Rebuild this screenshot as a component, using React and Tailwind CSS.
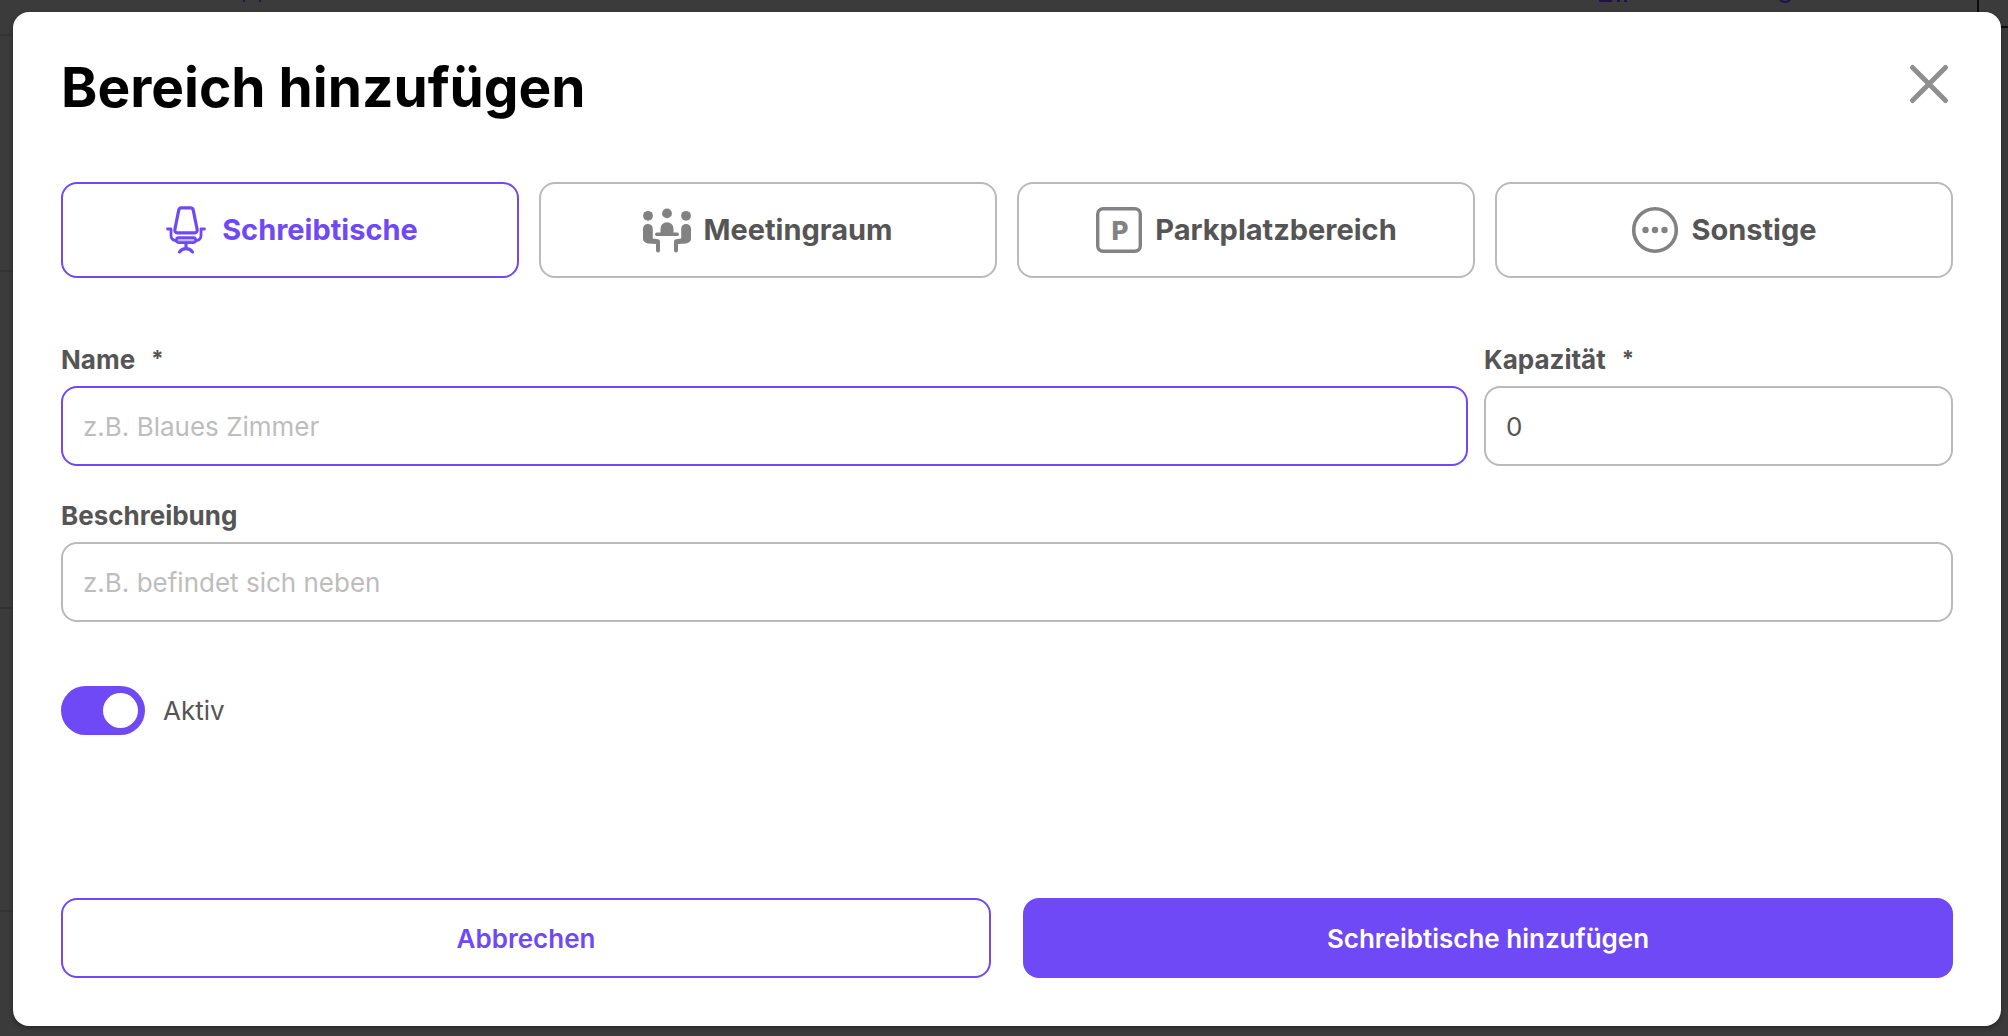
import { useState } from 'react';
import clsx from 'clsx';

const ChairIcon = () => (
  <svg viewBox="0 0 48 48" className="size-12 shrink-0" fill="none" stroke="currentColor" strokeLinecap="round" strokeLinejoin="round" aria-hidden="true">
    <path strokeWidth="3.2" d="M19.4 1.9h9.2c1.5 0 2.4 1 2.7 2.4l3.8 18.9c.4 2.2-.6 3.7-2.7 3.7H15.6c-2.1 0-3.1-1.5-2.7-3.7l3.8-18.9c.3-1.4 1.2-2.4 2.7-2.4z" />
    <path strokeWidth="2.8" d="M5.5 23H9v6.500c0 3 1.5 4.5 4.6 5.2M42.5 23H39v6.500c0 3-1.5 4.5-4.6 5.2" />
    <rect x="14.5" y="31.6" width="19" height="5" rx="2" fill="#c3b4fb" strokeWidth="2.6" />
    <path strokeWidth="3.2" d="M24 37v5.500M17.500 46c1.5-2.300 3.700-3.400 6.500-3.400s5 1.100 6.500 3.400" />
  </svg>
);

const MeetingIcon = () => (
  <svg viewBox="0 0 48 48" className="size-12 shrink-0" fill="currentColor" aria-hidden="true">
    <circle cx="5" cy="9.800" r="4.900" />
    <circle cx="24" cy="7.400" r="4.900" />
    <circle cx="43" cy="9.800" r="4.900" />
    <path d="M13.800 26.500h3.700v-3.800a6.500 6.500 0 0 1 13 0v3.800h3.700a1.800 1.800 0 0 1 0 3.600H13.800a1.800 1.800 0 0 1 0-3.600z" />
    <path d="M0 22.800a4.900 4.900 0 0 1 9.800 0v9.800l5 .6c1.400.2 2.200 1 2.200 2.300v8.900a2 2 0 0 1-4 0v-6.300l-8.200-.7C1.800 37.100 0 35.400 0 32.600z" />
    <path d="M48 22.800a4.900 4.900 0 0 0-9.800 0v9.800l-5 .6c-1.400.2-2.200 1-2.200 2.300v8.900a2 2 0 0 0 4 0v-6.300l8.200-.7c3-.3 4.800-2 4.800-4.800z" />
  </svg>
);

const ParkingIcon = () => (
  <svg viewBox="0 0 48 48" className="size-12 shrink-0" aria-hidden="true">
    <rect x="2.700" y="2.700" width="42.600" height="42.600" rx="5.500" fill="none" stroke="currentColor" strokeWidth="3.400" />
    <text x="25" y="33.500" textAnchor="middle" fill="currentColor" className="font-['Inter'] text-[26px] font-extrabold">P</text>
  </svg>
);

const OtherIcon = () => (
  <svg viewBox="0 0 48 48" className="size-12 shrink-0" fill="currentColor" aria-hidden="true">
    <circle cx="24" cy="24" r="21.300" fill="none" stroke="currentColor" strokeWidth="3.600" />
    <circle cx="14.500" cy="24" r="3.200" />
    <circle cx="24" cy="24" r="3.200" />
    <circle cx="33.500" cy="24" r="3.200" />
  </svg>
);

const areaTypes = [
  { id: 'desks', label: 'Schreibtische', icon: ChairIcon },
  { id: 'meeting', label: 'Meetingraum', icon: MeetingIcon },
  { id: 'parking', label: 'Parkplatzbereich', icon: ParkingIcon },
  { id: 'other', label: 'Sonstige', icon: OtherIcon },
];

const inputClass =
  'w-full h-20 px-5 border-2 rounded-2xl bg-white text-[26px] text-[#555555] placeholder:text-[#bdbdbd] outline-none focus:border-[#6e49f5]';

function Field({ id, label, required, children }) {
  return (
    <div className="flex flex-col gap-1.5">
      <label htmlFor={id} className="flex gap-4 text-[26px] leading-10 font-bold text-[#555555]">
        {label}
        {required && <span className="text-[22px] leading-9">*</span>}
      </label>
      {children}
    </div>
  );
}

// Dimmed page that stays visible around the dialog
function Backdrop() {
  return (
    <div className="absolute inset-0 bg-[#3b3b3b]" aria-hidden="true">
      <div className="absolute left-0 top-[34px] w-4 h-0.5 bg-[#333333]" />
      <div className="absolute left-0 top-[270px] w-4 h-0.5 bg-[#333333]" />
      <div className="absolute left-0 top-[607px] w-4 h-0.5 bg-[#333333]" />
      <div className="absolute left-0 top-[910px] w-4 h-0.5 bg-[#333333]" />
      <div className="absolute right-[29px] top-0 w-0.5 h-4 bg-[#0c0c0c]" />
      <div className="absolute right-0 top-[26px] w-4 h-0.5 bg-[#0c0c0c]" />
      <svg className="absolute left-[242px] top-0 w-5 h-2" viewBox="0 0 20 8" fill="#1e1246">
        <path d="M1 0h2v2H1zM17 0h2v2h-2z" />
      </svg>
      <svg className="absolute right-[209px] top-0 w-[200px] h-2" viewBox="0 0 200 8" fill="#1e1246">
        <path d="M0 0h13v2H0zM18 0h3v2h-3zM25 0h3v2h-3z" />
        <path d="M181 0q5 4 10 0" fill="none" stroke="#1e1246" strokeWidth="2" />
      </svg>
    </div>
  );
}

export default function App() {
  const [type, setType] = useState('desks');
  const [form, setForm] = useState({ name: '', capacity: 0, description: '', active: true });

  const update = (key, value) => setForm((prev) => ({ ...prev, [key]: value }));
  const selected = areaTypes.find((t) => t.id === type);

  return (
    <div className="relative min-h-screen flex pt-3 pb-2.5 pl-[13px] pr-[7px] font-['Inter',sans-serif]">
      <Backdrop />

      <form
        role="dialog"
        aria-labelledby="dialog-title"
        onSubmit={(e) => e.preventDefault()}
        className="relative flex-1 flex flex-col p-12 bg-white rounded-2xl shadow-[0_2px_5px_rgba(0,0,0,0.35)]">
        <div className="flex items-start justify-between">
          <h1 id="dialog-title" className="text-[55px] leading-[54px] font-bold text-black">
            Bereich hinzufügen
          </h1>
          <button type="button" aria-label="Schließen" className="size-12 text-[#8f8f8f]">
            <svg viewBox="0 0 48 48" className="size-12" fill="none" stroke="currentColor" strokeWidth="5" strokeLinecap="round">
              <path d="M7.500 7.500l33 33M40.500 7.500l-33 33" />
            </svg>
          </button>
        </div>

        <div className="grid grid-cols-4 gap-5 mt-[68px]">
          {areaTypes.map(({ id, label, icon: Icon }) => (
            <button
              key={id}
              type="button"
              aria-pressed={type === id}
              onClick={() => setType(id)}
              className={clsx(
                'flex items-center justify-center gap-3 h-24 border-2 rounded-2xl text-[29px] font-bold',
                type === id ? 'border-[#6e49f5] text-[#6e49f5]' : 'border-[#bababa] text-[#828282]'
              )}>
              <Icon />
              <span className={type === id ? 'text-[#6e49f5]' : 'text-[#555555]'}>{label}</span>
            </button>
          ))}
        </div>

        <div className="flex flex-col gap-[30px] mt-[62px]">
          <div className="grid grid-cols-[3fr_1fr] gap-4">
            <Field id="name" label="Name" required>
              <input
                id="name"
                value={form.name}
                onChange={(e) => update('name', e.target.value)}
                className={clsx(inputClass, 'border-[#6e49f5]')}
                placeholder="z.B. Blaues Zimmer"
              />
            </Field>
            <Field id="capacity" label="Kapazität" required>
              <input
                id="capacity"
                type="number"
                value={form.capacity}
                onChange={(e) => update('capacity', e.target.value)}
                className={clsx(inputClass, 'border-[#bababa] [appearance:textfield]')}
              />
            </Field>
          </div>

          <Field id="description" label="Beschreibung">
            <input
              id="description"
              value={form.description}
              onChange={(e) => update('description', e.target.value)}
              className={clsx(inputClass, 'border-[#bababa]')}
              placeholder="z.B. befindet sich neben"
            />
          </Field>
        </div>

        <div className="flex items-center gap-[18px] mt-16 mb-12">
          <input
            id="active"
            type="checkbox"
            role="switch"
            checked={form.active}
            onChange={(e) => update('active', e.target.checked)}
            className="appearance-none flex items-center w-[84px] h-[49px] px-[7px] rounded-full bg-[#bababa] checked:bg-[#6e49f5] checked:justify-end before:size-[35px] before:rounded-full before:bg-white before:content-['']"
          />
          <label htmlFor="active" className="text-[26px] leading-10 text-[#555555]">Aktiv</label>
        </div>

        <div className="grid grid-cols-2 gap-8 mt-auto text-[26px] font-semibold">
          <button type="button" className="h-20 border-2 border-[#6e49f5] rounded-2xl text-[#6e49f5]">
            Abbrechen
          </button>
          <button type="submit" className="h-20 rounded-2xl bg-[#6e49f5] text-white">
            {selected.label} hinzufügen
          </button>
        </div>
      </form>
    </div>
  );
}
